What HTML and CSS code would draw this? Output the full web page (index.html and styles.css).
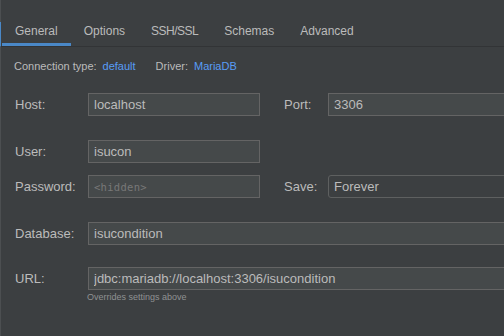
FILE: index.html
```html
<!DOCTYPE html>
<html>
    <head>
        <meta charset="utf-8" />
        <title>Data Source - General</title>
        <link rel="stylesheet" href="styles.css">
    </head>
    <body>
        <div class="window">
            <ul class="tabs">
                <li class="tab active">General</li>
                <li class="tab">Options</li>
                <li class="tab">SSH/SSL</li>
                <li class="tab">Schemas</li>
                <li class="tab">Advanced</li>
            </ul>
            <div class="conn-info">
                <span class="info-label">Connection type:</span>
                <a class="info-link" href="#">default</a>
                <span class="info-label driver">Driver:</span>
                <a class="info-link" href="#">MariaDB</a>
            </div>
            <div class="form">
                <div class="row">
                    <label class="label">Host:</label>
                    <input class="field" type="text" value="localhost" readonly>
                    <label class="label side">Port:</label>
                    <input class="field wide" type="text" value="3306" readonly>
                </div>
                <div class="row gap-lg">
                    <label class="label">User:</label>
                    <input class="field" type="text" value="isucon" readonly>
                </div>
                <div class="row gap-sm">
                    <label class="label">Password:</label>
                    <input class="field pass" type="password" placeholder="<hidden>" readonly>
                    <label class="label side">Save:</label>
                    <div class="combo">Forever</div>
                </div>
                <div class="row gap-lg">
                    <label class="label">Database:</label>
                    <input class="field wide" type="text" value="isucondition" readonly>
                </div>
                <div class="row gap-url">
                    <label class="label">URL:</label>
                    <input class="field wide" type="text" value="jdbc:mariadb://localhost:3306/isucondition" readonly>
                </div>
                <p class="hint">Overrides settings above</p>
            </div>
        </div>
    </body>
</html>
```

FILE: styles.css
```css
* {
	padding: 0;
	margin: 0;
	box-sizing: border-box;
}
html, body {
	width: 100%;
	height: 100%;
	overflow: hidden;
}
body {
	background-color: #3c3f41;
	color: #bbbbbb;
	font-family: "Liberation Sans", Arial, sans-serif;
	font-size: 13px;
}
.window {
	width: 640px;
	min-height: 100vh;
	border-left: 1px solid #4c4f51;
	padding-top: 22px;
}
.tabs {
	display: flex;
	list-style: none;
	margin-left: -1px;
	padding-left: 1px;
	border-left: 1px solid #4a88c7;
	border-bottom: 1px solid #323436;
	height: 25px;
}
.tab {
	font-size: 12px;
	line-height: 16px;
	padding: 1px 13px 4px 13px;
	border-bottom: 3px solid transparent;
	height: 24px;
}
.tab:nth-child(3) {
	letter-spacing: -0.5px;
}
.tab.active {
	border-bottom-color: #4a88c7;
}
.conn-info {
	display: flex;
	align-items: center;
	font-size: 11px;
	line-height: 14px;
	margin: 12px 0 0 13px;
}
.info-link {
	color: #589df6;
	text-decoration: none;
	margin-left: 6px;
}
.driver {
	margin-left: 20px;
}
.form {
	margin-top: 20px;
	padding-left: 14px;
}
.row {
	display: flex;
	align-items: center;
	height: 23px;
}
.gap-lg {
	margin-top: 24px;
}
.gap-sm {
	margin-top: 12px;
}
.gap-url {
	margin-top: 22px;
}
.label {
	width: 73px;
	font-size: 13px;
}
.label.side {
	width: 44px;
	margin-left: 24px;
}
.field {
	width: 172px;
	height: 23px;
	background-color: #45494a;
	border: 1px solid #646464;
	color: #bbbbbb;
	font-family: inherit;
	font-size: 13px;
	padding: 0 5px;
	outline: none;
}
.field.wide {
	flex: 1;
}
.pass::placeholder {
	color: #787878;
	font-family: "DejaVu Sans Mono", monospace;
	font-size: 10.5px;
	letter-spacing: 0.3px;
}
.combo {
	flex: 1;
	height: 23px;
	line-height: 21px;
	border: 1px solid #5e6060;
	border-radius: 3px;
	background-color: #3c3f41;
	padding-left: 5px;
}
.hint {
	font-size: 9px;
	line-height: 12px;
	color: #8f9192;
	margin: 1px 0 0 72px;
}
```
